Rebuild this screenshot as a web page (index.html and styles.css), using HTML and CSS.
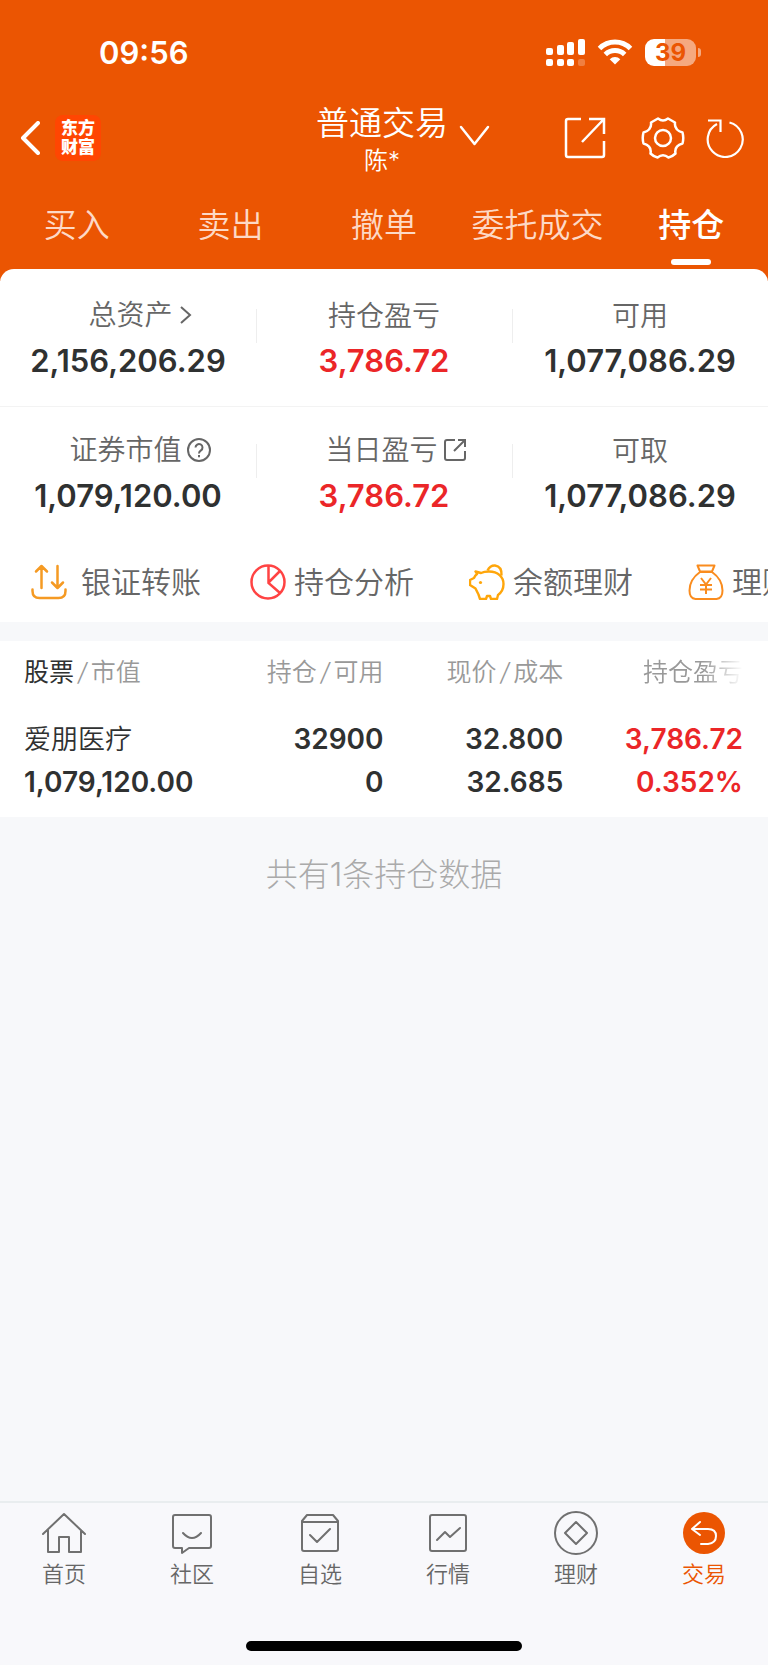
FILE: index.html
```html
<!DOCTYPE html>
<html lang="zh-CN">
<head>
	<meta charset="utf-8">
	<meta name="viewport" content="width=device-width, initial-scale=1">
	<title>普通交易 - 持仓</title>
	<link rel="stylesheet" href="styles.css">
</head>
<body>
<header class="top">
	<div class="status">
		<span class="time">09:56</span>
		<span class="status-icons">
			<svg width="39" height="27" viewBox="0 0 39 27" fill="#fff">
				<rect x="0" y="9" width="7" height="7" rx="2"/>
				<rect x="11" y="6" width="7" height="10" rx="2"/>
				<rect x="21" y="3" width="7" height="13" rx="2"/>
				<rect x="32" y="0" width="7" height="16" rx="2"/>
				<rect x="0" y="20" width="7" height="7" rx="2"/>
				<rect x="11" y="20" width="7" height="7" rx="2"/>
				<rect x="21" y="20" width="7" height="7" rx="2"/>
				<rect x="32" y="20" width="7" height="7" rx="2" opacity=".25"/>
			</svg>
			<svg width="36" height="26" viewBox="0 0 36 26" fill="none" stroke="#fff" stroke-width="5">
				<path d="M2.500 9.500a22 22 0 0 1 31 0"/>
				<path d="M8.300 15.500a14 14 0 0 1 19.400 0"/>
				<path d="M18 25.500l-5.300-5.300a7.500 7.500 0 0 1 10.600 0z" fill="#fff" stroke="none"/>
			</svg>
			<span class="battery"><span class="level">39</span></span>
		</span>
	</div>
	<div class="titlebar">
		<div class="left">
			<button class="icon-btn" aria-label="返回">
				<svg width="20" height="34" viewBox="0 0 20 34" fill="none" stroke="#fff" stroke-width="4" stroke-linecap="round" stroke-linejoin="round"><path d="M18 2L3 17l15 15"/></svg>
			</button>
			<a class="logo" href="#">东方<br>财富</a>
		</div>
		<button class="account">
			<span class="account-text">
				<span class="account-type">普通交易</span>
				<span class="account-name">陈*</span>
			</span>
			<svg class="account-arrow" width="31" height="22" viewBox="0 0 31 22" fill="none" stroke="#fff" stroke-width="2.500" stroke-linecap="round" stroke-linejoin="round"><path d="M2 2l13.500 17L29 2"/></svg>
		</button>
		<div class="right">
			<button class="icon-btn" aria-label="分享">
				<svg width="42" height="42" viewBox="0 0 42 42" fill="none" stroke="#fff" stroke-width="2.500"><path d="M17 2H4a2 2 0 0 0-2 2v34a2 2 0 0 0 2 2h34a2 2 0 0 0 2-2V24M25 2h15v15M40 2L18 25"/></svg>
			</button>
			<button class="icon-btn gear" aria-label="设置">
				<svg width="44" height="44" viewBox="0 0 44 44" fill="none" stroke="#fff" stroke-width="2.500" stroke-linejoin="round">
					<path d="M17 2.500Q22 6.500 27 2.500L34 6.500Q33 14 41.500 16.500Q43 22 41.500 27.500Q33 30 34.500 37.500Q31.500 40.500 27.500 41.500Q22 37 16.500 41.500Q12.500 40.500 9.500 37.500Q11 30 2.500 27.500Q1 22 2.500 16.500Q11 14 10 6.500z"/>
					<circle cx="22" cy="22" r="8"/>
				</svg>
			</button>
			<button class="icon-btn" aria-label="刷新">
				<svg width="38" height="40" viewBox="0 0 38 40" fill="none" stroke="#fff" stroke-width="2.200"><path d="M23.500 4.500A17.500 17.500 0 1 1 11 6M2 2.500h12.500V14"/></svg>
			</button>
		</div>
	</div>
	<nav class="tabs">
		<a href="#">买入</a>
		<a href="#">卖出</a>
		<a href="#">撤单</a>
		<a href="#">委托成交</a>
		<a class="active" href="#">持仓</a>
	</nav>
</header>

<main>
	<section class="assets">
		<div class="asset-row">
			<div class="asset">
				<span class="label with-icon">总资产<svg width="14" height="20" viewBox="0 0 14 20" fill="none" stroke="#666" stroke-width="2"><path d="M3 2l9 8-9 8"/></svg></span>
				<span class="value">2,156,206.29</span>
			</div>
			<div class="asset">
				<span class="label">持仓盈亏</span>
				<span class="value red">3,786.72</span>
			</div>
			<div class="asset">
				<span class="label">可用</span>
				<span class="value">1,077,086.29</span>
			</div>
		</div>
		<div class="asset-row">
			<div class="asset">
				<span class="label with-icon">证券市值<svg width="24" height="24" viewBox="0 0 24 24" fill="none" stroke="#666" stroke-width="2"><circle cx="12" cy="12" r="11"/><path d="M8.500 9.500a3.500 3.500 0 1 1 5.500 2.900q-2 1.400-2 3.100M12 17v2.300"/></svg></span>
				<span class="value">1,079,120.00</span>
			</div>
			<div class="asset">
				<span class="label with-icon">当日盈亏<svg width="24" height="24" viewBox="0 0 24 24" fill="none" stroke="#666" stroke-width="2"><path d="M12 2H4a2 2 0 0 0-2 2v16a2 2 0 0 0 2 2h16a2 2 0 0 0 2-2v-7M15 2h7v7M22 2L11 13"/></svg></span>
				<span class="value red">3,786.72</span>
			</div>
			<div class="asset">
				<span class="label">可取</span>
				<span class="value">1,077,086.29</span>
			</div>
		</div>
	</section>

	<nav class="actions">
		<a class="wide" href="#">
			<svg width="36" height="36" viewBox="0 0 36 36" fill="none" stroke="#f59a23" stroke-width="2.500" stroke-linecap="round" stroke-linejoin="round"><path d="M10.500 24V2.500M5 7.500l5.500-5.500L16 7.500M26.500 2v21M21 18.500l5.500 5.500 5.500-5.500M1.500 25.500v1.500q0 7 7 7h19q7 0 7-7v-1.500"/></svg>
			<span>银证转账</span>
		</a>
		<a href="#">
			<svg width="36" height="36" viewBox="0 0 36 36" fill="none" stroke="#ff4343" stroke-width="2.500"><circle cx="18" cy="18" r="16.500"/><path d="M18.500 2v17L30 29M18.500 18.500L30 7"/></svg>
			<span>持仓分析</span>
		</a>
		<a href="#">
			<svg width="36" height="36" viewBox="0 0 36 36" fill="none" stroke="#ffa60a" stroke-width="2.400" stroke-linejoin="round"><path d="M6.500 7.500L12 9Q15 7.500 20 7.500C29 7.500 34.500 13 34.500 20q0 7-5.500 11l-1 4h-6l-1-3h-3l-1 3h-6l-1.500-4.500-3-6-5.500-3.500v-5L5 14q1-2.500 3-4z"/><path d="M18.500 6.500Q21 1.300 26 1.500q7 1 6.500 10"/><circle cx="11.500" cy="18.500" r="1.600" fill="#ffa60a" stroke="none"/></svg>
			<span>余额理财</span>
		</a>
		<a href="#">
			<svg width="36" height="36" viewBox="0 0 36 36" fill="none" stroke="#fa8c1e" stroke-width="2" stroke-linejoin="round"><path d="M9.500 1.500h17L24 7.500H12zM12 8h12q10.500 7.500 10.500 18.500 0 8-6 8.500h-21q-6-.500-6-8.500Q1.500 15.500 12 8zM13 14l5 6.500 5-6.500M18 20.500V30M12 21h12M12 25.500h12"/></svg>
			<span>理财</span>
		</a>
	</nav>

	<table class="holdings">
		<thead>
			<tr>
				<th><b>股票</b><i>/</i>市值</th>
				<th>持仓<i>/</i>可用</th>
				<th>现价<i>/</i>成本</th>
				<th><span class="fade">持仓盈亏</span></th>
			</tr>
		</thead>
		<tbody>
			<tr>
				<td><span class="name">爱朋医疗</span>1,079,120.00</td>
				<td>32900<br>0</td>
				<td>32.800<br>32.685</td>
				<td class="red">3,786.72<br>0.352%</td>
			</tr>
		</tbody>
	</table>
	<p class="count">共有1条持仓数据</p>
</main>

<footer class="bottom">
	<nav class="menu">
		<a href="#">
			<svg width="44" height="44" viewBox="0 0 44 44"><path d="M1 23L22 3l21 20M6 19v22h11V26h10v15h12V19"/></svg>
			首页
		</a>
		<a href="#">
			<svg width="44" height="44" viewBox="0 0 44 44"><path d="M5 4h34a2 2 0 0 1 2 2v29a2 2 0 0 1-2 2H19l-7 5v-5H5a2 2 0 0 1-2-2V6a2 2 0 0 1 2-2zM13 22q9 10 18 0"/></svg>
			社区
		</a>
		<a href="#">
			<svg width="44" height="44" viewBox="0 0 44 44"><path d="M9 4h26l5 6v28a2 2 0 0 1-2 2H6a2 2 0 0 1-2-2V10zM4 11h36M12 24l7 7 13-13"/></svg>
			自选
		</a>
		<a href="#">
			<svg width="44" height="44" viewBox="0 0 44 44"><rect x="4" y="4" width="36" height="36" rx="2"/><path d="M11 29l8-8 5 5 10-9"/></svg>
			行情
		</a>
		<a href="#">
			<svg width="44" height="44" viewBox="0 0 44 44"><circle cx="22" cy="22" r="21"/><path d="M22 11l11 11-11 11-11-11z"/></svg>
			理财
		</a>
		<a class="active" href="#">
			<svg width="44" height="44" viewBox="0 0 44 44"><circle cx="22" cy="22" r="21" fill="#eb5502" stroke="none"/><path stroke="#fff" d="M19 33h7q8-1 8-8 0-7-8-7H10M18 11l-8 7 8 6"/></svg>
			交易
		</a>
	</nav>
	<div class="home-bar"></div>
</footer>
</body>
</html>
```
FILE: styles.css
```css
* {
	box-sizing: border-box;
}
body {
	margin: 0;
	min-height: 100vh;
	display: flex;
	flex-direction: column;
	background-color: #f7f8fa;
	color: #2f3131;
	font-family: Inter, "Noto Sans CJK SC", sans-serif;
	font-weight: 350;
	overflow-x: hidden;
}
a {
	color: inherit;
	text-decoration: none;
}
button {
	padding: 0;
	border: 0;
	background: none;
	color: inherit;
	font: inherit;
	cursor: pointer;
}
svg {
	display: block;
	flex: none;
}
.red {
	color: #eb2628;
}

/* header */
.top {
	background-color: #eb5502;
	color: #fff;
	padding-top: 32px;
}
.status {
	display: flex;
	justify-content: space-between;
	align-items: center;
	height: 40px;
	padding: 0 67px 0 99px;
}
.time {
	font-size: 31px;
	font-weight: 600;
}
.status-icons {
	display: flex;
	align-items: center;
	gap: 12px;
}
.battery {
	position: relative;
	width: 51px;
	height: 27px;
	margin-right: 5px;
	border-radius: 9px;
	background: linear-gradient(to right, #fff 40%, #f5a980 40%);
	color: #eb5502;
	text-align: center;
}
.battery::after {
	content: "";
	position: absolute;
	right: -5px;
	top: 9px;
	width: 3px;
	height: 9px;
	border-radius: 0 4px 4px 0;
	background-color: #f5a980;
}
.level {
	display: block;
	font-size: 24px;
	line-height: 27px;
	font-weight: 700;
}
.titlebar {
	display: grid;
	grid-template-columns: 1fr auto 1fr;
	align-items: center;
	height: 132px;
	padding: 0 24px 0 20px;
}
.left, .right {
	display: flex;
	align-items: center;
}
.left {
	gap: 15px;
}
.right {
	justify-content: flex-end;
	gap: 21px;
}
.gear {
	margin-left: 14px;
}
.logo {
	width: 46px;
	height: 46px;
	padding-top: 4px;
	border-radius: 8px;
	background-color: #ff4602;
	font-size: 17px;
	line-height: 19px;
	font-weight: 900;
	text-align: center;
}
.account {
	position: relative;
	padding-top: 4px;
}
.account-text {
	display: block;
}
.account-type, .account-name {
	display: block;
}
.account-type {
	font-size: 33px;
	line-height: 42px;
}
.account-name {
	font-size: 24px;
	line-height: 34px;
}
.account-arrow {
	position: absolute;
	left: 100%;
	top: 27px;
	margin-left: 11px;
}
.tabs {
	display: grid;
	grid-template-columns: repeat(5, 1fr);
	height: 77px;
	padding-bottom: 12px;
	text-align: center;
	font-size: 33px;
	line-height: 42px;
	color: #fdd9c6;
}
.tabs .active {
	position: relative;
	color: #fff;
	font-weight: 500;
}
.tabs .active::after {
	content: "";
	position: absolute;
	left: 50%;
	bottom: 4px;
	width: 40px;
	height: 6px;
	margin-left: -20px;
	border-radius: 3px;
	background-color: #fff;
}

/* assets */
.assets {
	position: relative;
	margin-top: -12px;
	border-radius: 14px 14px 0 0;
	background-color: #fff;
}
.asset-row {
	display: grid;
	grid-template-columns: repeat(3, 1fr);
	padding: 28px 0 30px;
}
.asset-row:first-child {
	padding: 31px 0 27px;
	border-bottom: 1px solid #f3f3f3;
}
.asset {
	position: relative;
	display: flex;
	flex-direction: column;
	align-items: center;
	gap: 11px;
}
.asset + .asset::before {
	content: "";
	position: absolute;
	left: 0;
	top: 9px;
	width: 1px;
	height: 34px;
	background-color: #eee;
}
.label {
	display: flex;
	align-items: center;
	gap: 5px;
	font-size: 28px;
	line-height: 32px;
	color: #666;
}
.with-icon {
	padding: 0 0 2px 24px;
	line-height: 30px;
}
.value {
	font-size: 31px;
	line-height: 36px;
	font-weight: 600;
}

/* shortcuts */
.actions {
	display: flex;
	height: 78px;
	padding: 0 0 2px 31px;
	overflow: hidden;
	background-color: #fff;
	font-size: 30px;
	color: #666;
}
.actions a {
	display: flex;
	flex: 0 0 219px;
	align-items: center;
	gap: 8px;
	white-space: nowrap;
}
.actions span {
	padding-bottom: 4px;
}
.actions .wide {
	gap: 14px;
}

/* holdings */
.holdings {
	width: 100%;
	margin-top: 19px;
	padding: 0 25px 0 24px;
	table-layout: fixed;
	border-spacing: 0;
	background-color: #fff;
}
.holdings th, .holdings td {
	padding: 0;
	text-align: right;
	white-space: nowrap;
}
.holdings th {
	height: 64px;
	padding-bottom: 6px;
	font-size: 25px;
	font-weight: 350;
	color: #999;
}
.holdings th:first-child, .holdings td:first-child {
	text-align: left;
}
.holdings th b {
	font-weight: 400;
	color: #2f3131;
}
.holdings th i {
	margin: 0 4px;
}
.holdings td {
	padding: 13px 0;
	font-size: 28px;
	line-height: 43px;
	font-weight: 600;
}
.fade {
	-webkit-mask-image: linear-gradient(to right, #000 60%, transparent);
	mask-image: linear-gradient(to right, #000 60%, transparent);
}
.holdings .name {
	display: block;
	font-size: 27px;
	font-weight: 350;
}
.count {
	margin: 36px 0 0;
	text-align: center;
	font-size: 32px;
	line-height: 44px;
	font-weight: 300;
	color: #aaa;
}

/* bottom menu */
.bottom {
	margin-top: auto;
	padding-bottom: 14px;
	border-top: 2px solid #e9edef;
	background-color: #f8f8fb;
}
.menu {
	display: grid;
	grid-template-columns: repeat(6, 1fr);
	padding-top: 8px;
}
.menu a {
	display: flex;
	flex-direction: column;
	align-items: center;
	gap: 4px;
	font-size: 22px;
	line-height: 30px;
	color: #666;
}
.menu svg {
	fill: none;
	stroke: #707070;
	stroke-width: 2;
	stroke-linecap: round;
	stroke-linejoin: round;
}
.menu .active {
	color: #eb5502;
}
.home-bar {
	width: 36%;
	height: 10px;
	margin: 52px auto 0;
	border-radius: 5px;
	background-color: #000;
}
```
